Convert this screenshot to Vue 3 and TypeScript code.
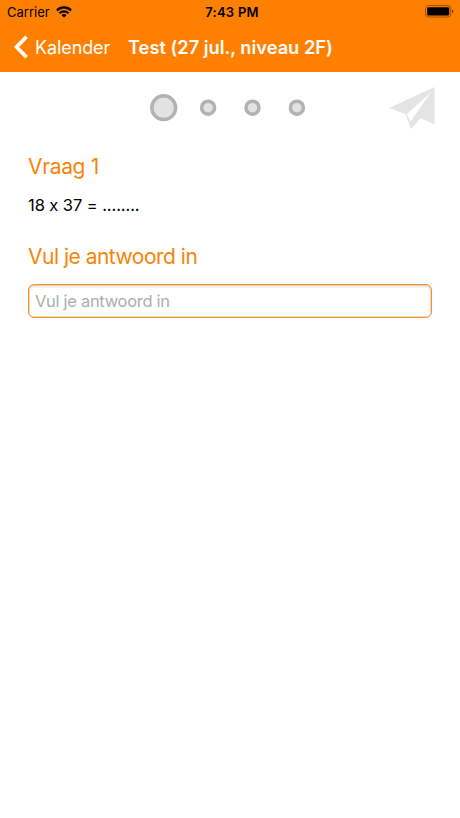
<script setup lang="ts">
import { ref } from 'vue'

const current = ref(0)
const questions = [{ id: 1, text: '18 x 37 = ........' }, { id: 2, text: '' }, { id: 3, text: '' }, { id: 4, text: '' }]
const answer = ref('')
</script>

<template>
  <div class="screen">
    <header class="top">
      <div class="status">
        <div class="network">
          <span class="carrier">Carrier</span>
          <svg class="wifi" width="16" height="12" viewBox="0 0 16 12">
            <g fill="none" stroke="#000" stroke-width="2.3">
              <path d="M.9 4.4a10 10 0 0 1 14.2 0" />
              <path d="M3.4 7.3a6.5 6.5 0 0 1 9.2 0" />
            </g>
            <path d="M8 11.6 5.5 9.2a3.5 3.5 0 0 1 5 0Z" />
          </svg>
        </div>
        <span class="time">7:43 PM</span>
        <svg class="battery" width="29" height="13" viewBox="0 0 29 13">
          <rect x=".6" y=".6" width="25.2" height="11.4" rx="2.8" fill="none" stroke="#9b5000" stroke-width="1" />
          <rect x="2.2" y="2.2" width="22" height="8.2" rx="1.2" />
          <path d="M27 4.5c1.8.5 1.8 3.1 0 3.6Z" fill="#6b3600" />
        </svg>
      </div>
      <nav class="nav">
        <button class="back">
          <svg width="15" height="24" viewBox="0 0 15 24">
            <path d="M12.6 1.8 2.6 12l10 10.2" fill="none" stroke="#fff" stroke-width="3.7" />
          </svg>
          <span class="back-label">Kalender</span>
        </button>
        <h1 class="title">Test (27 jul., niveau 2F)</h1>
      </nav>
    </header>
    <div class="progress">
      <svg class="dots" width="156" height="28" viewBox="0 0 156 28">
        <circle
          v-for="(q, i) in questions"
          :key="q.id"
          class="dot"
          :cx="13.7 + i * 44.4"
          cy="13.7"
          :r="i === current ? 11.9 : 6.5"
          @click="current = i"
        />
      </svg>
      <svg class="send" width="46" height="43" viewBox="0 0 46 43">
        <path d="M0 21 45.5 0v37.3l-14-6L21.8 42l-5-14.8Z" fill="#e4e4e4" />
        <path d="M42 5 17.8 27.2l3.8 7.6Z" fill="#fff" />
      </svg>
    </div>
    <main class="content">
      <h2 class="heading question-heading">Vraag {{ questions[current].id }}</h2>
      <p class="question">{{ questions[current].text }}</p>
      <h2 class="heading answer-heading">Vul je antwoord in</h2>
      <input v-model="answer" class="answer" placeholder="Vul je antwoord in" />
    </main>
  </div>
</template>

<style>
body {
  background: #fff;
}
</style>

<style scoped>
.screen {
  height: 818px;
  overflow: hidden;
  background: #fff;
  color: #000;
  font-family: Inter, sans-serif;
  font-feature-settings: 'calt' 0;
}
.top {
  height: 71.5px;
  background: #ff8000;
}
.status {
  display: grid;
  grid-template-columns: 1fr auto 1fr;
  align-items: center;
  height: 24px;
  padding: 0 6px 0 7px;
  font-size: 13px;
}
.network {
  display: flex;
  align-items: center;
  gap: 6px;
}
.wifi {
  margin-top: -1px;
}
.time {
  padding-left: 3px;
  font-size: 13px;
  font-weight: 600;
  letter-spacing: 0.25px;
}
.battery {
  justify-self: end;
  margin-top: -1px;
}
.nav {
  display: flex;
  align-items: center;
  height: 46px;
  padding-left: 14px;
  color: #fff;
}
.back {
  display: flex;
  align-items: center;
  gap: 6px;
  width: 114px;
  padding: 0;
  border: 0;
  background: none;
  color: #fff;
  font: 400 18px/24px Inter, sans-serif;
  letter-spacing: -0.1px;
}
.back svg {
  flex: none;
}
.back-label {
  padding-top: 1px;
}
.title {
  margin: 0;
  font-size: 18.25px;
  font-weight: 600;
  line-height: 24px;
  white-space: nowrap;
}
.progress {
  display: flex;
  align-items: flex-start;
  justify-content: space-between;
  height: 73px;
  padding: 0 25px 0 150px;
}
.dots {
  margin-top: 22.5px;
}
.dot {
  fill: #e2e2e2;
  stroke: #b2b2b2;
  stroke-width: 3.5px;
}
.send {
  margin-top: 15px;
}
.content {
  display: flex;
  flex-direction: column;
  padding: 8px 28px 0;
}
.heading {
  margin: 0;
  color: #f78409;
  font-size: 21px;
  font-weight: 400;
  line-height: 28px;
  letter-spacing: -0.5px;
}
.question-heading {
  letter-spacing: -0.35px;
}
.question {
  margin: 12px 0 26px;
  font-size: 16.5px;
  line-height: 24px;
  letter-spacing: -0.08px;
}
.answer {
  box-sizing: border-box;
  width: 100%;
  height: 34px;
  margin-top: 13.5px;
  padding: 0 6px;
  border: 1px solid #ed9433;
  border-radius: 6px;
  outline: none;
  background: #fff;
  box-shadow: inset 0 0 0 0.5px #f3b16a, inset 0 2.5px 1px #ececec;
  font: 400 16.5px/24px Inter, sans-serif;
  letter-spacing: -0.3px;
}
.answer::placeholder {
  color: #adadad;
  opacity: 1;
}
</style>
